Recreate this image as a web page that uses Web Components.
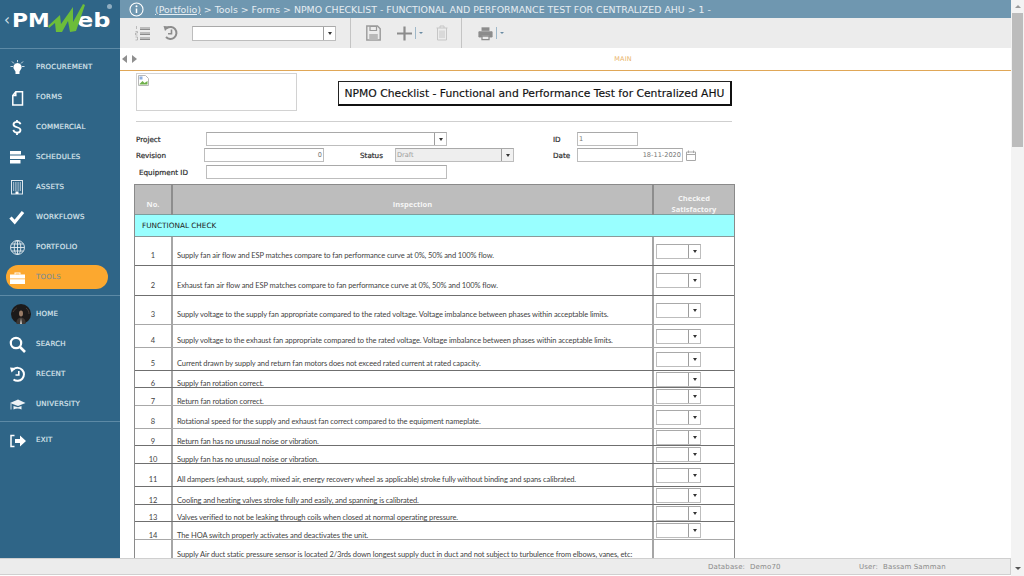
<!DOCTYPE html>
<html><head><meta charset="utf-8"><title>PMWeb</title>
<style>html,body{margin:0;padding:0;height:100%;overflow:hidden;background:#fff}</style></head>
<body><pm-app></pm-app>
<script>
const icons={
procurement:'<svg width="22" height="22" viewBox="0 0 22 22"><path d="M11.500 7a4.200 4.200 0 0 1 2.700 7.400c-.5.500-.7 1-.7 1.600v2h-4v-2c0-.6-.2-1.100-.7-1.600a4.200 4.200 0 0 1 2.700-7.400z" fill="#fff"/><path d="M11.500 4v2.200M6 5.500l2 2M17 5.500l-2 2M4.500 10.500h2.500M16 10.500h2.500" stroke="#dfe8ee" stroke-width=".9" fill="none"/></svg>',
forms:'<svg width="22" height="22" viewBox="0 0 22 22"><path d="M9.800 5.800H16.500V19H6.800V9.500z M9.800 5.800V9.500H6.800" fill="none" stroke="#fff" stroke-width="1.500"/></svg>',
commercial:'<svg width="22" height="22" viewBox="0 0 22 22"><path d="M14.500 8.200c-.4-1.600-1.700-2.300-3.500-2.300-2 0-3.500.9-3.500 2.600 0 3.500 7 2 7 5.400 0 1.800-1.500 2.700-3.500 2.700s-3.300-.9-3.600-2.700M11 4v2M11 17v2" fill="none" stroke="#fff" stroke-width="1.800"/></svg>',
schedules:'<svg width="22" height="22" viewBox="0 0 22 22"><path d="M4 5h11v3.500H4zM4 9.500h15V13H4zM4 14h10.500v3.500H4z" fill="#fff"/></svg>',
assets:'<svg width="22" height="22" viewBox="0 0 22 22"><rect x="5.500" y="4.500" width="11" height="13.500" fill="none" stroke="#dfe8ee" stroke-width="1"/><path d="M7.500 6v9M9.300 6v9M11 6v9M12.800 6v9M14.500 6v9" stroke="#a9c0cf" stroke-width=".9"/><path d="M9.500 15.500h3v2.500h-3z" fill="#fff"/></svg>',
workflows:'<svg width="22" height="22" viewBox="0 0 22 22"><path d="M4.500 11.500l4.200 4.500L17 6" fill="none" stroke="#fff" stroke-width="3.200"/></svg>',
portfolio:'<svg width="22" height="22" viewBox="0 0 22 22"><g fill="none" stroke="#e6edf2" stroke-width=".9"><circle cx="11.500" cy="11.500" r="7"/><ellipse cx="11.500" cy="11.500" rx="3.300" ry="7"/><path d="M11.500 4.500v14M4.500 11.500h14M5.500 8h12M5.500 15h12"/></g></svg>',
tools:'<svg width="22" height="22" viewBox="0 0 22 22"><path d="M8.500 8.500V6.500h6v2h-1v-1h-4v1z" fill="#fff"/><path d="M4 8.500h15v4H4zM4 13.200h15V18H4z" fill="#fff"/></svg>',
home:'<svg style="margin-left:5px;flex:none" width="20" height="20" viewBox="0 0 20 20"><circle cx="10" cy="10" r="10" fill="#1c1a1a"/><path d="M5.500 20c-.3-4 1-6 4.500-6.500 3.500.5 4.800 2.500 4.500 6.500z" fill="#3e3835"/><ellipse cx="10" cy="9.500" rx="2" ry="3" fill="#9a7d68"/><path d="M10 14l1 6H9z" fill="#cfc7c0"/><path d="M2 8c2-3 3-4 4-4M15 4c2 2 3 3 3 6" stroke="#4a3d36" fill="none"/></svg>',
search:'<svg width="22" height="22" viewBox="0 0 22 22"><circle cx="10" cy="10" r="5.200" fill="none" stroke="#fff" stroke-width="2.200"/><path d="M14 14l5 5" stroke="#fff" stroke-width="2.600"/></svg>',
recent:'<svg width="22" height="22" viewBox="0 0 22 22"><path d="M7.500 6.200A6.500 6.500 0 1 1 7.500 16.500" fill="none" stroke="#fff" stroke-width="2"/><path d="M4 4.500l6 .5-4.500 4.500z" fill="#fff"/><path d="M12.800 8v4H9.500" fill="none" stroke="#fff" stroke-width="1.600"/></svg>',
university:'<svg width="22" height="22" viewBox="0 0 22 22"><path d="M4 10l8-3.500 7.500 3.500-7.500 3z" fill="#eef3f6"/><path d="M7.500 13v3.500c2.500-1.500 5.500-1.500 8 0V13l-3.500 1.300z" fill="#eef3f6"/><path d="M5 10.500v6" stroke="#eef3f6" stroke-width=".8"/></svg>',
exit:'<svg width="22" height="22" viewBox="0 0 22 22"><path d="M8.500 6.500H5v11h3.500" fill="none" stroke="#fff" stroke-width="1.500"/><path d="M9 10h5V6.500l6 5.500-6 5.500V14H9z" fill="#fff"/></svg>'
};
function def(name,css,html,init){customElements.define(name,class extends HTMLElement{
 connectedCallback(){if(this.shadowRoot)return;const r=this.attachShadow({mode:'open'});r.innerHTML='<style>'+css+'</style>'+(typeof html==='function'?html(this):html);if(init)init(this,r);}
});}

def('pm-nav-item',`:host{display:flex;align-items:center;height:30px;padding:0 12px 0 6px}
.i{display:flex;flex:1;align-items:center;height:24.500px;border-radius:12.500px}
:host([active]) .i{background:#fca82f}
.ic{width:22px;height:22px;margin-right:8px;display:flex;align-items:center;flex:none}
.t{font:400 7px "DejaVu Sans",sans-serif;color:#d8e3ea;letter-spacing:.25px;-webkit-text-stroke:.2px #d8e3ea}
:host([active]) .t{color:#7d8d93;-webkit-text-stroke:.1px #7d8d93}`,
h=>`<div class="i"><span class="ic">${icons[h.getAttribute('icon')]}</span><span class="t"><slot></slot></span></div>`);

def('pm-sidebar',`:host{display:flex;flex-direction:column;width:120px;flex:none;background:#2f6587;overflow:hidden}
.logo{flex:none;border-bottom:1px solid #5d8aa6;position:relative;display:flex;align-items:center;padding:1px 0 9px 4px;box-sizing:content-box;height:38px}
.ch{color:#d5e2ea;font:400 15px "DejaVu Sans",sans-serif;width:8px}
.pm,.eb{font:700 20px "DejaVu Sans",sans-serif;color:#fff;display:inline-block;transform-origin:0 50%;line-height:20px}
.pm{transform:scaleX(1.09)}
.eb{transform:scaleX(1.2);margin-left:30px}
svg.w{position:absolute;left:0;top:0}
.r{position:absolute;left:107px;top:4px;width:5px;height:5px;border-radius:50%;background:#8fadc0}
nav{padding-top:3px}
.sep{height:1px;background:#5d8aa6;margin:3px 0 3px;flex:none}
.sep2{margin:2px 0 3px}`,
`<div class="logo"><span class="ch">&#8249;</span><span class="pm">PM</span><span class="eb">eb</span>
<svg class="w" width="90" height="36" viewBox="0 0 90 36"><path d="M48 26L60 15L61 24L73 7L73 22L83 4L85 5L76 31L70 32L68 21L62 32L56 32L55 23L49 28Z" fill="#6cbd3a"/></svg><span class="r"></span></div>
<nav><slot name="a"></slot></nav><div class="sep"></div><nav style="padding-top:0"><slot name="b"></slot></nav><div class="sep sep2"></div><nav style="padding-top:0"><slot name="c"></slot></nav>`);

def('pm-titlebar',`:host{display:flex;align-items:center;height:18px;background:#6f97b0;color:#e6edf2;font:400 9.400px "DejaVu Sans",sans-serif;white-space:nowrap;padding-left:9px;flex:none;overflow:hidden}
svg{margin-right:11px;flex:none}`,
`<svg width="15" height="15" viewBox="0 0 15 15"><circle cx="7.500" cy="7.500" r="6.500" fill="none" stroke="#fff" stroke-width="1.100"/><path d="M7.500 6.500v4.500" stroke="#fff" stroke-width="1.500"/><circle cx="7.500" cy="4.300" r="1" fill="#fff"/></svg><span><slot></slot></span>`);

def('pm-select',`:host{display:inline-flex;box-sizing:border-box;height:14px;border:1px solid #bdbdbd;border-top-color:#a9a9a9;background:#fff;font:400 6.600px "DejaVu Sans",sans-serif;color:#9a9a9a;align-items:center;overflow:hidden}
:host([disabled]){background:#eeeeee}
.v{flex:1;padding-left:1px;overflow:hidden}
.b{width:11px;height:100%;border-left:1px solid #9e9e9e;display:flex;align-items:center;justify-content:center;background:#fff;flex:none}
:host([disabled]) .b{background:#f1f1f1}
i{display:block;width:0;height:0;border:2.500px solid transparent;border-top:3px solid #333;border-bottom:0}`,
`<span class="v"><slot></slot></span><span class="b"><i></i></span>`);

def('pm-input',`:host{display:inline-flex;box-sizing:border-box;height:14px;border:1px solid #bdbdbd;border-top-color:#a9a9a9;background:#fff;font:400 6.600px "DejaVu Sans",sans-serif;color:#777;align-items:center;padding:0 1px;overflow:hidden}
:host([right]){justify-content:flex-end}`,`<slot></slot>`);

def('pm-toolbar',`:host{display:flex;align-items:stretch;height:30px;background:#ececec;flex:none}
.s{display:flex;align-items:center}
.a{width:231px;padding-left:15px;box-sizing:border-box;border-right:1px solid #c4c4c4}
.b{width:111px;padding-left:15px;box-sizing:border-box;border-right:1px solid #c4c4c4}
.c{padding-left:16px}
pm-select{width:144px;height:15px;margin-left:13px}
.sp{width:1px;height:12px;background:#9fb8c9;margin:0 3px 0 3px}
i{display:block;width:0;height:0;border:2px solid transparent;border-top:2.500px solid #6a8ba3;border-bottom:0}`,
`<div class="s a"><svg width="15" height="16" viewBox="0 0 15 16"><path d="M5 3h10M5 4.500h10M5 8h10M5 9.500h10M5 13h10M5 14.500h10" stroke="#8c8c8c" stroke-width="1"/><path d="M1.500 1v3M.5 6.500h2v1.500h-2v2h2M.5 12h2v3h-2" stroke="#9a9a9a" stroke-width=".6" fill="none"/></svg>
<svg width="16" height="16" viewBox="0 0 16 16" style="margin-left:13px"><path d="M3.800 3.200A6 6 0 1 1 3 12" fill="none" stroke="#8c8c8c" stroke-width="2"/><path d="M.5 1l6 .5L2 6z" fill="#8c8c8c"/><path d="M8.500 4.500v4.300H5" fill="none" stroke="#8c8c8c" stroke-width="1.600"/></svg>
<pm-select></pm-select></div>
<div class="s b"><svg width="15" height="16" viewBox="0 0 15 16"><path d="M.8 1h10.700l2.700 2.700V15H.8z" fill="none" stroke="#9a9a9a" stroke-width="1.400"/><path d="M4 1.500h6.500v4H4z" fill="none" stroke="#9a9a9a" stroke-width="1.200"/><path d="M3.200 9h8.600v6H3.200z" fill="#b9b9b9"/></svg>
<svg width="15" height="15" viewBox="0 0 15 15" style="margin-left:16px"><path d="M7.500 .5v14M0 7.500h15" stroke="#8c8c8c" stroke-width="2.200"/></svg><span class="sp"></span><i></i>
<svg width="12" height="16" viewBox="0 0 12 16" style="margin-left:13px"><path d="M.5 3h11M4 3V1h4v2M1.500 3v12h9V3M4 5.500v7.500M6 5.500v7.500M8 5.500v7.500" fill="none" stroke="#c6c6c6" stroke-width="1"/></svg></div>
<div class="s c"><svg width="15" height="15" viewBox="0 0 17 16"><path d="M4 1h9v4H4z" fill="#8c8c8c"/><path d="M1 6h15v6h-3v-2H4v2H1z" fill="#8c8c8c" stroke="#8c8c8c"/><path d="M4.500 11h8v4h-8z" fill="none" stroke="#8c8c8c" stroke-width="1.400"/></svg><span class="sp"></span><i></i></div>`);

def('pm-tabs',`:host{display:flex;align-items:center;height:22px;background:#fff;border-bottom:1.500px solid #e0a757;flex:none}
.ar{display:flex;gap:5px;padding-left:2px;flex:none}
.l,.r{width:0;height:0;border:4px solid transparent}
.l{border-right:5px solid #8f8f8f;border-left:0}.r{border-left:5px solid #8f8f8f;border-right:0}
.m{flex:1;text-align:center;font:400 6.500px "DejaVu Sans",sans-serif;color:#e9b36a;letter-spacing:.2px;padding-left:98px}`,
`<div class="ar"><span class="l"></span><span class="r"></span></div><div class="m"><slot></slot></div>`);

def('pm-form-head',`:host{display:block;font-family:"DejaVu Sans",sans-serif}
.top{display:flex;align-items:flex-start;padding-top:2px}
.logo{width:161px;height:38px;box-sizing:border-box;border:1px solid #d2d2d2;padding:1px}
.t{margin:8px 0 0 41px;width:394px;height:25px;box-sizing:border-box;border:1px solid #222;border-right:2px solid #111;border-bottom:2px solid #111;display:flex;align-items:center;justify-content:center;font:400 10.750px "DejaVu Sans",sans-serif;color:#111;-webkit-text-stroke:.15px #111;white-space:nowrap}
hr{height:0;border:0;border-top:1px solid #cfcfcf;margin:10px 0 0;width:596px}
.row{display:flex;align-items:center;height:14px;font:400 7.200px "DejaVu Sans",sans-serif;color:#2c2c2c;-webkit-text-stroke:.2px #2c2c2c;white-space:nowrap}
.lb{flex:none}
pm-input,pm-select{-webkit-text-stroke:0}
.cal{margin-left:3px}`,
`<div class="top"><div class="logo"><svg width="11" height="11" viewBox="0 0 11 11" style="display:block"><path d="M.5.500h7l3 3v7H.5z" fill="#fff" stroke="#b8b8b8"/><path d="M1.500 9l3-3 2 2 3-2v3.500h-8z" fill="#6fb04a"/><path d="M1.500 1.500h3v3h-3z" fill="#8fb0e0"/></svg></div><div class="t">NPMO Checklist - Functional and Performance Test for Centralized AHU</div></div>
<hr>
<div class="row" style="margin-top:10px"><span class="lb" style="width:70px">Project</span><pm-select style="width:241px"></pm-select><span class="lb" style="width:24px;margin-left:106px">ID</span><pm-input style="width:61px">1</pm-input></div>
<div class="row" style="margin-top:2px"><span class="lb" style="width:68px">Revision</span><pm-input right style="width:120px">0</pm-input><span class="lb" style="width:35px;margin-left:36px">Status</span><pm-select disabled style="width:119px">Draft</pm-select><span class="lb" style="width:24px;margin-left:39px">Date</span><pm-input right style="width:106px">18-11-2020</pm-input><svg class="cal" width="10" height="11" viewBox="0 0 10 11"><path d="M.5 2h9v8.500h-9zM.5 4.500h9" fill="none" stroke="#a8a8a8"/><path d="M2.500.500v2.500M7.500.500v2.500" stroke="#a8a8a8"/></svg></div>
<div class="row" style="margin-top:3px"><span class="lb" style="width:67px;padding-left:3px">Equipment ID</span><pm-input style="width:241px"></pm-input></div>`);

def('pm-check-table',`:host{display:block;width:601px;margin-top:5px;margin-left:-2px;box-sizing:border-box;border-left:1px solid #8a8a8a;border-right:1px solid #8a8a8a}
.h{display:grid;grid-template-columns:36px 1fr 82px;height:30px;background:#bdbdbd;border-top:1px solid #8a8a8a;box-sizing:border-box;color:#f5f5f5;font:700 7.500px "Open Sans",sans-serif;text-align:center}
.h div{display:flex;align-items:flex-end;justify-content:center;padding-bottom:5px;line-height:11px}
.h div+div{border-left:2px solid #8d8d8d}
.h div:last-child{padding:8px 0 0;align-items:flex-start}
.g{height:23px;box-sizing:border-box;background:#99ffff;border-top:1px solid #7b9e9e;border-bottom:1px solid #8a9a9a;display:flex;align-items:center;padding-left:7px;font:400 7.300px "DejaVu Sans",sans-serif;color:#222}`,
`<div class="h"><div>No.</div><div>Inspection</div><div>Checked<br>Satisfactory</div></div><div class="g">FUNCTIONAL CHECK</div><slot></slot>`);

def('pm-check-row',`:host{display:grid;grid-template-columns:36px 1fr 82px;box-sizing:border-box;border-bottom:1px solid #6f6f6f;font:400 7.500px/7px "Lato",sans-serif;letter-spacing:-.1px;color:#3f3f3f;background:#fff}
:host([thick]){border-bottom:1px solid #a8a8a8}
.n{display:flex;align-items:flex-end;justify-content:center;padding-bottom:var(--pb)}
.t{border-left:2px solid #a6a6a6;display:flex;align-items:flex-end;padding:0 0 var(--pb) 4px;white-space:nowrap}
.c{border-left:2px solid #a6a6a6;display:flex;align-items:flex-start;padding:var(--sel) 0 0 2px}
pm-select{width:45px;height:15px}
:host([noselect]) pm-select{display:none}`,
h=>`<div class="n">${h.getAttribute('n')||''}</div><div class="t"><span><slot></slot></span></div><div class="c"><pm-select></pm-select></div>`,
h=>{const H=+h.getAttribute('h');h.style.height=H+'px';
 h.style.setProperty('--pb',(h.getAttribute('pad')||(H>=29?6:H>=23?3:0))+'px');
 h.style.setProperty('--sel',(H>=29?7:H>=23?4:1)+'px');});

def('pm-statusbar',`:host{display:flex;height:17px;margin-bottom:1px;box-sizing:border-box;background:#ececec;border-top:1px solid #cfcfcf;border-right:1px solid #d0d0d0;border-bottom:1px solid #d0d0d0;font:400 7px "DejaVu Sans",sans-serif;color:#8a8a8a;align-items:center;letter-spacing:.15px;white-space:nowrap;flex:none}
.a{margin-left:708px;width:42px}.b{width:109px}.c{width:24px}`,
`<span class="a">Database:</span><span class="b">Demo70</span><span class="c">User:</span><span>Bassam Samman</span>`);

def('pm-scrollbar',`:host{display:flex;flex-direction:column;width:13px;flex:none;background:#f3f3f3;align-items:center;position:relative}
.th{position:absolute;left:1px;right:1px;top:13px;height:134px;background:#bcbcbc}
.f{flex:1}
i{display:block;width:0;height:0;border:3px solid transparent}
.u{border-bottom:3.500px solid #9a9a9a;border-top:0;margin-top:5px}
.d{border-top:3.500px solid #555;border-bottom:0;margin-bottom:6px}`,
`<i class="u"></i><div class="th"></div><div class="f"></div><i class="d"></i>`);

def('pm-app',`:host{display:flex;width:1024px;height:576px;overflow:hidden;font-family:"DejaVu Sans",sans-serif}
.left{flex:1;min-width:0;display:flex;flex-direction:column}
.top{flex:1;min-height:0;display:flex}
.m{flex:1;min-width:0;display:flex;flex-direction:column}
.content{flex:1;min-height:0;overflow:hidden;padding-left:16px;background:#fff}`,
`<div class="left"><div class="top"><pm-sidebar>
<pm-nav-item slot="a" icon="procurement">PROCUREMENT</pm-nav-item><pm-nav-item slot="a" icon="forms">FORMS</pm-nav-item><pm-nav-item slot="a" icon="commercial">COMMERCIAL</pm-nav-item><pm-nav-item slot="a" icon="schedules">SCHEDULES</pm-nav-item><pm-nav-item slot="a" icon="assets">ASSETS</pm-nav-item><pm-nav-item slot="a" icon="workflows">WORKFLOWS</pm-nav-item><pm-nav-item slot="a" icon="portfolio">PORTFOLIO</pm-nav-item><pm-nav-item slot="a" icon="tools" active>TOOLS</pm-nav-item>
<pm-nav-item slot="b" icon="home">HOME</pm-nav-item><pm-nav-item slot="b" icon="search">SEARCH</pm-nav-item><pm-nav-item slot="b" icon="recent">RECENT</pm-nav-item><pm-nav-item slot="b" icon="university">UNIVERSITY</pm-nav-item>
<pm-nav-item slot="c" icon="exit">EXIT</pm-nav-item>
</pm-sidebar>
<div class="m"><pm-titlebar><u>(Portfolio)</u> &gt; Tools &gt; Forms &gt; NPMO CHECKLIST - FUNCTIONAL AND PERFORMANCE TEST FOR CENTRALIZED AHU &gt; 1 -</pm-titlebar>
<pm-toolbar></pm-toolbar>
<pm-tabs>MAIN</pm-tabs>
<div class="content"><pm-form-head></pm-form-head>
<pm-check-table>
<pm-check-row n="1" h="29">Supply fan air flow and ESP matches compare to fan performance curve at 0%, 50% and 100% flow.</pm-check-row>
<pm-check-row n="2" h="30">Exhaust fan air flow and ESP matches compare to fan performance curve at 0%, 50% and 100% flow.</pm-check-row>
<pm-check-row n="3" h="29" thick>Supply voltage to the supply fan appropriate compared to the rated voltage. Voltage imbalance between phases within acceptable limits.</pm-check-row>
<pm-check-row n="4" h="23" thick>Supply voltage to the exhaust fan appropriate compared to the rated voltage. Voltage imbalance between phases within acceptable limits.</pm-check-row>
<pm-check-row n="5" h="23">Current drawn by supply and return fan motors does not exceed rated current at rated capacity.</pm-check-row>
<pm-check-row n="6" h="17">Supply fan rotation correct.</pm-check-row>
<pm-check-row n="7" h="18" thick>Return fan rotation correct.</pm-check-row>
<pm-check-row n="8" h="23" thick>Rotational speed for the supply and exhaust fan correct compared to the equipment nameplate.</pm-check-row>
<pm-check-row n="9" h="17">Return fan has no unusual noise or vibration.</pm-check-row>
<pm-check-row n="10" h="18">Supply fan has no unusual noise or vibration.</pm-check-row>
<pm-check-row n="11" h="23">All dampers (exhaust, supply, mixed air, energy recovery wheel as applicable) stroke fully without binding and spans calibrated.</pm-check-row>
<pm-check-row n="12" h="18">Cooling and heating valves stroke fully and easily, and spanning is calibrated.</pm-check-row>
<pm-check-row n="13" h="17">Valves verified to not be leaking through coils when closed at normal operating pressure.</pm-check-row>
<pm-check-row n="14" h="18" thick>The HOA switch properly activates and deactivates the unit.</pm-check-row>
<pm-check-row noselect h="40" pad="21">Supply Air duct static pressure sensor is located 2/3rds down longest supply duct in duct and not subject to turbulence from elbows, vanes, etc:</pm-check-row>
</pm-check-table></div></div></div>
<pm-statusbar></pm-statusbar></div><pm-scrollbar></pm-scrollbar>`);
</script></body></html>
